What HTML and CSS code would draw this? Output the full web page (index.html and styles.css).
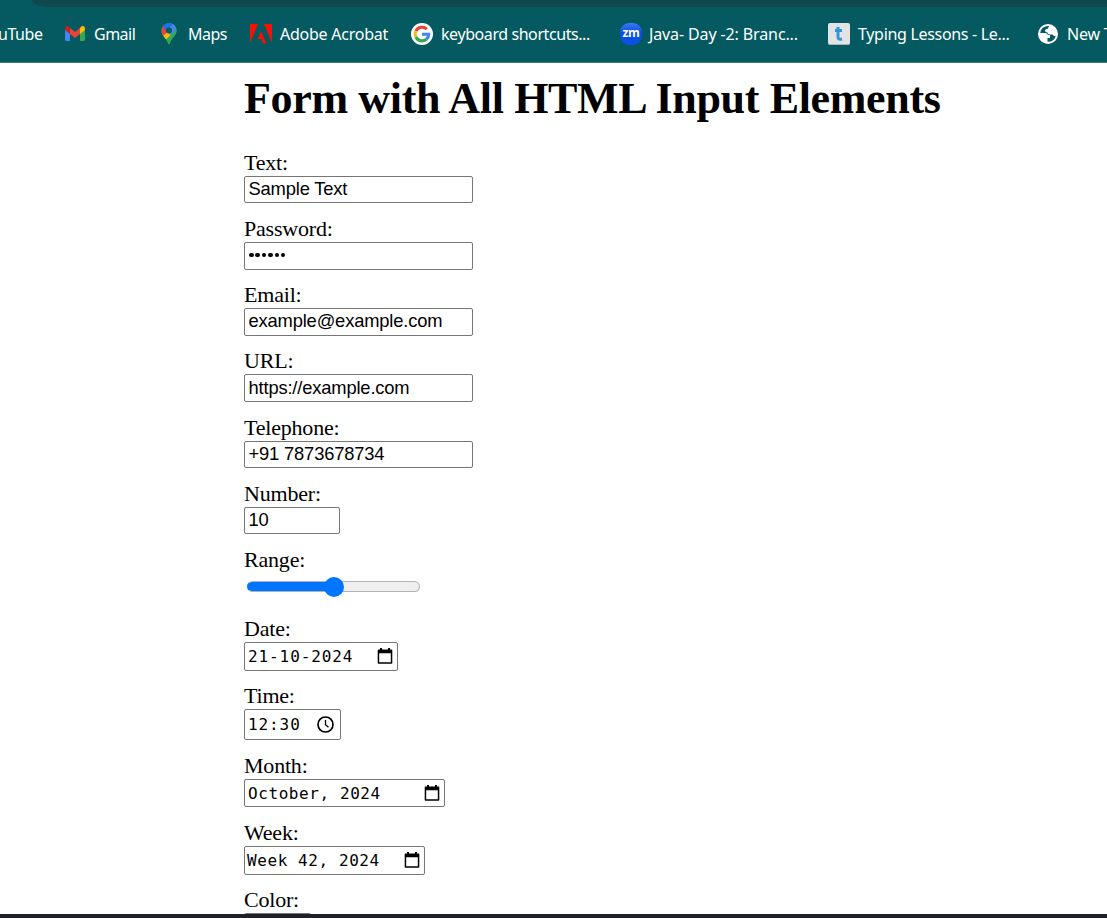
FILE: index.html
```html
<!DOCTYPE html>
<html lang="en">
<head>
<meta charset="utf-8">
<title>Form with All HTML Input Elements</title>
<link rel="stylesheet" href="styles.css">
</head>
<body>
<header class="browser">
  <div class="address"></div>
  <nav class="bookmarks">
    <span class="bookmark youtube">uTube</span>
    <span class="bookmark gmail"><svg width="20" height="16" viewBox="0 0 20 16"><path fill="#4285f4" d="M0 3h5v12H1.400Q0 15 0 13.600Z"/><path fill="#34a853" d="M15 3h5v10.600Q20 15 18.600 15H15Z"/><path fill="#ea4335" d="M5 2l5 4 5-4v6l-5 4-5-4Z"/><path fill="#c5221f" d="M0 3Q0 0 2.500 0 3.500 0 5 2v6L0 4Z"/><path fill="#fbbc04" d="M15 2q1.500-2 2.500-2Q20 0 20 3v1l-5 4Z"/></svg><span>Gmail</span></span>
    <span class="bookmark maps"><svg width="16" height="22" viewBox="0 0 16 22"><defs><clipPath id="pin"><path d="M8 0a7.500 7.500 0 0 1 7.500 7.500C15.500 13 10.500 14 8.800 20.500Q8 22 7.200 20.500C6 15.500.5 13 .5 7.500A7.500 7.500 0 0 1 8 0Z"/></clipPath></defs><g clip-path="url(#pin)"><path fill="#34a853" d="M0 0h16v22H0Z"/><path fill="#fbbc04" d="M0 11.500 8 3l4 7-8.500 8Z"/><path fill="#ea4335" d="M0 2h4l5 5-7 6-2-1Z"/><path fill="#1a73e8" d="M1.500 2 8-1l5 2-7.500 8Z"/><path fill="#4285f4" d="M12.500 0 16 5 10 13 6 7.500Z"/><path fill="#34a853" d="M16 5 10 12 3 20l8 2 5-8Z"/></g><circle cx="8" cy="7.500" r="3" fill="#065a60"/></svg><span>Maps</span></span>
    <span class="bookmark adobe"><svg width="22" height="20" viewBox="0 0 22 20"><path fill="#fa0f00" d="M0 0h8L0 19ZM14 0h8v19ZM11 7l5.500 12.500H13L11.500 15H7.500Z"/></svg><span>Adobe Acrobat</span></span>
    <span class="bookmark google"><svg width="22" height="22" viewBox="0 0 22 22"><circle cx="11" cy="11" r="11" fill="#fff"/><g fill="none" stroke-width="3.100"><path stroke="#ea4335" d="M4.900 8A6.800 6.800 0 0 1 15.800 6.200"/><path stroke="#fbbc04" d="M4.900 8a6.800 6.800 0 0 0 0 6"/><path stroke="#34a853" d="M4.900 14a6.800 6.800 0 0 0 10.500 2.200"/><path stroke="#4285f4" d="M15.400 16.200A6.500 6.500 0 0 0 17.700 11.200H11"/></g></svg><span>keyboard shortcuts...</span></span>
    <span class="bookmark zoom"><span class="zm">zm</span><span>Java- Day -2: Branc...</span></span>
    <span class="bookmark typing"><span class="tile"><svg width="10" height="16" viewBox="0 0 10 16"><path d="M4 1v10q0 3 4 2M1 4.500h7" fill="none" stroke="#2e96df" stroke-width="3"/></svg></span><span>Typing Lessons - Le...</span></span>
    <span class="bookmark newtab"><svg width="20" height="20" viewBox="0 0 20 20"><circle cx="10" cy="10" r="10" fill="#fff"/><path fill="#045a60" d="M11 2Q3 2 2.200 9H7q2.500 0 3 2h2v3H9.500v3.800Q16 18 17.700 12H16l-1.500-1.500H12Q9.500 10.500 9.500 8.500 7 8.500 7 6.500 7 5 10 4.500Z"/></svg><span>New T</span></span>
  </nav>
</header>
<main class="page">
  <h1>Form with All HTML Input Elements</h1>
  <form>
    <div class="field"><label>Text:</label><input class="h27" type="text" value="Sample Text"></div>
    <div class="field"><label>Password:</label><div class="control password"><i></i><i></i><i></i><i></i><i></i><i></i></div></div>
    <div class="field"><label>Email:</label><input type="email" value="example@example.com"></div>
    <div class="field tall"><label>URL:</label><input class="url" type="url" value="https://example.com"></div>
    <div class="field"><label>Telephone:</label><input class="h27" type="tel" value="+91 7873678734"></div>
    <div class="field"><label>Number:</label><input class="h27 number" type="text" value="10"></div>
    <div class="field range-field"><label>Range:</label><div class="range"><div class="thumb"></div></div></div>
    <div class="field date-field"><label>Date:</label><div class="control date"><span>21-10-2024</span><svg class="icon" width="16" height="17" viewBox="0 0 16 17"><path fill="#000" fill-rule="evenodd" d="M3 0h2v1.500h6V0h2v1.500h1.500q.8 0 .8.8V15q0 .8-.8.8h-13q-.8 0-.8-.8V2.300q0-.8.8-.8H3ZM2.200 5.300v9h11.600v-9Z"/></svg></div></div>
    <div class="field time-field"><label>Time:</label><div class="control time"><span>12:30</span><svg class="icon" width="17" height="17" viewBox="0 0 17 17"><circle cx="8.500" cy="8.500" r="7.500" fill="none" stroke="#000" stroke-width="1.700"/><path d="M8.500 4v4.700l3 2.600" fill="none" stroke="#000" stroke-width="1.300"/></svg></div></div>
    <div class="field month-field"><label>Month:</label><div class="control month"><span>October, 2024</span><svg class="icon" width="16" height="17" viewBox="0 0 16 17"><path fill="#000" fill-rule="evenodd" d="M3 0h2v1.500h6V0h2v1.500h1.500q.8 0 .8.8V15q0 .8-.8.8h-13q-.8 0-.8-.8V2.300q0-.8.8-.8H3ZM2.200 5.300v9h11.600v-9Z"/></svg></div></div>
    <div class="field week-field"><label>Week:</label><div class="control week"><span>Week 42, 2024</span><svg class="icon" width="16" height="17" viewBox="0 0 16 17"><path fill="#000" fill-rule="evenodd" d="M3 0h2v1.500h6V0h2v1.500h1.500q.8 0 .8.8V15q0 .8-.8.8h-13q-.8 0-.8-.8V2.300q0-.8.8-.8H3ZM2.200 5.300v9h11.600v-9Z"/></svg></div></div>
    <div class="field"><label>Color:</label><div class="control color"></div></div>
  </form>
</main>
<footer class="taskbar"></footer>
</body>
</html>
```
FILE: styles.css
```css
* { box-sizing: border-box; }
body { margin: 0; width: 1107px; height: 918px; overflow: hidden; display: flex; flex-direction: column; background: #fff; font: 22px/25px "Liberation Serif", serif; color: #000; }
.browser { flex: none; height: 63px; background: #045a60; border-bottom: 1px solid #3f7c82; overflow: hidden; }
.address { height: 7px; margin-left: 32px; background: #10484f; border-bottom-left-radius: 18px 7px; }
.bookmarks { display: flex; height: 54px; font: 16px/22px "Noto Sans", sans-serif; color: #fff; white-space: nowrap; }
.bookmark { display: flex; flex: none; align-items: center; }
.bookmark svg { flex: none; }
.youtube { width: 65px; letter-spacing: -.45px; margin-left: -2px; padding-right: 2px; }
.gmail { width: 96px; gap: 9px; letter-spacing: -.5px; margin-left: 2px; }
.maps { width: 89px; gap: 11px; letter-spacing: -.5px; }
.adobe { width: 161px; gap: 8px; letter-spacing: -.25px; }
.google { width: 209px; gap: 8px; letter-spacing: -.42px; }
.zoom { width: 208px; gap: 7px; letter-spacing: -.12px; }
.typing { width: 210px; gap: 8px; letter-spacing: -.31px; }
.newtab { gap: 9px; letter-spacing: -.2px; }
.zm { width: 22px; height: 22px; border-radius: 9px; background: linear-gradient(#3b78f5, #0b4de0 45%, #0b50e8); font: bold 12px/20px "Open Sans", sans-serif; text-align: center; letter-spacing: -.3px; }
.tile { display: flex; align-items: center; justify-content: center; width: 22px; height: 22px; background: #e1e3e5; border-bottom: 1px solid #adb5b8; border-radius: 2px; }
.page { flex: 1; min-height: 0; overflow: hidden; padding: 11px 0 0 244px; }
h1 { margin: 0 0 26px; font-size: 44px; line-height: 50px; font-weight: bold; white-space: nowrap; letter-spacing: -.34px; }
.field { height: 66px; display: flex; flex-direction: column; align-items: flex-start; }
.tall { height: 67px; }
.range-field { height: 69px; }
.date-field { height: 67px; }
.time-field { height: 70px; }
.month-field, .week-field { height: 67px; }
label { display: block; height: 26px; flex: none; letter-spacing: -.2px; }
input, .control { width: 229px; height: 28px; margin: 0; padding: 0 4px 1px; border: 1px solid #767676; border-radius: 2px; background: #fff; color: #000; font: 18.333px/24px "Liberation Sans", sans-serif; outline: 0; flex: none; }
input { padding: 0 3.500px 2px; letter-spacing: -.16px; }
.url { padding-bottom: 0; }
.h27 { height: 27px; }
.number { width: 96px; }
.control { display: flex; align-items: center; justify-content: space-between; font: 16px/24px "DejaVu Sans Mono", monospace; white-space: pre; letter-spacing: .58px; }
.control span { padding-top: 2px; }
.password { justify-content: flex-start; gap: 1.900px; padding-bottom: 2px; }
.password i { width: 4.500px; height: 4.500px; border-radius: 50%; background: #000; }
.range { width: 173px; height: 11px; margin: 8px 0 0 3px; border: 1px solid #b2b2b2; border-left-color: #0075ff; border-radius: 6px; background: linear-gradient(90deg, #0075ff 50%, #efefef 50%); background-origin: border-box; display: flex; align-items: center; justify-content: center; }
.thumb { width: 20px; height: 20px; border-radius: 50%; background: #0075ff; flex: none; }
.date { width: 154px; height: 29px; padding: 0 4px 1px 3px; letter-spacing: .9px; }
.time { width: 97px; height: 31px; padding: 0 6px 1px 3px; letter-spacing: .9px; }
.month { width: 201px; padding: 0 4px 0 3px; }
.week { width: 181px; height: 29px; padding: 0 4px 1px 2px; }
.icon { flex: none; }
.color { width: 67px; background: #efefef; }
.taskbar { flex: none; height: 4px; background: #1f2029; }
```
